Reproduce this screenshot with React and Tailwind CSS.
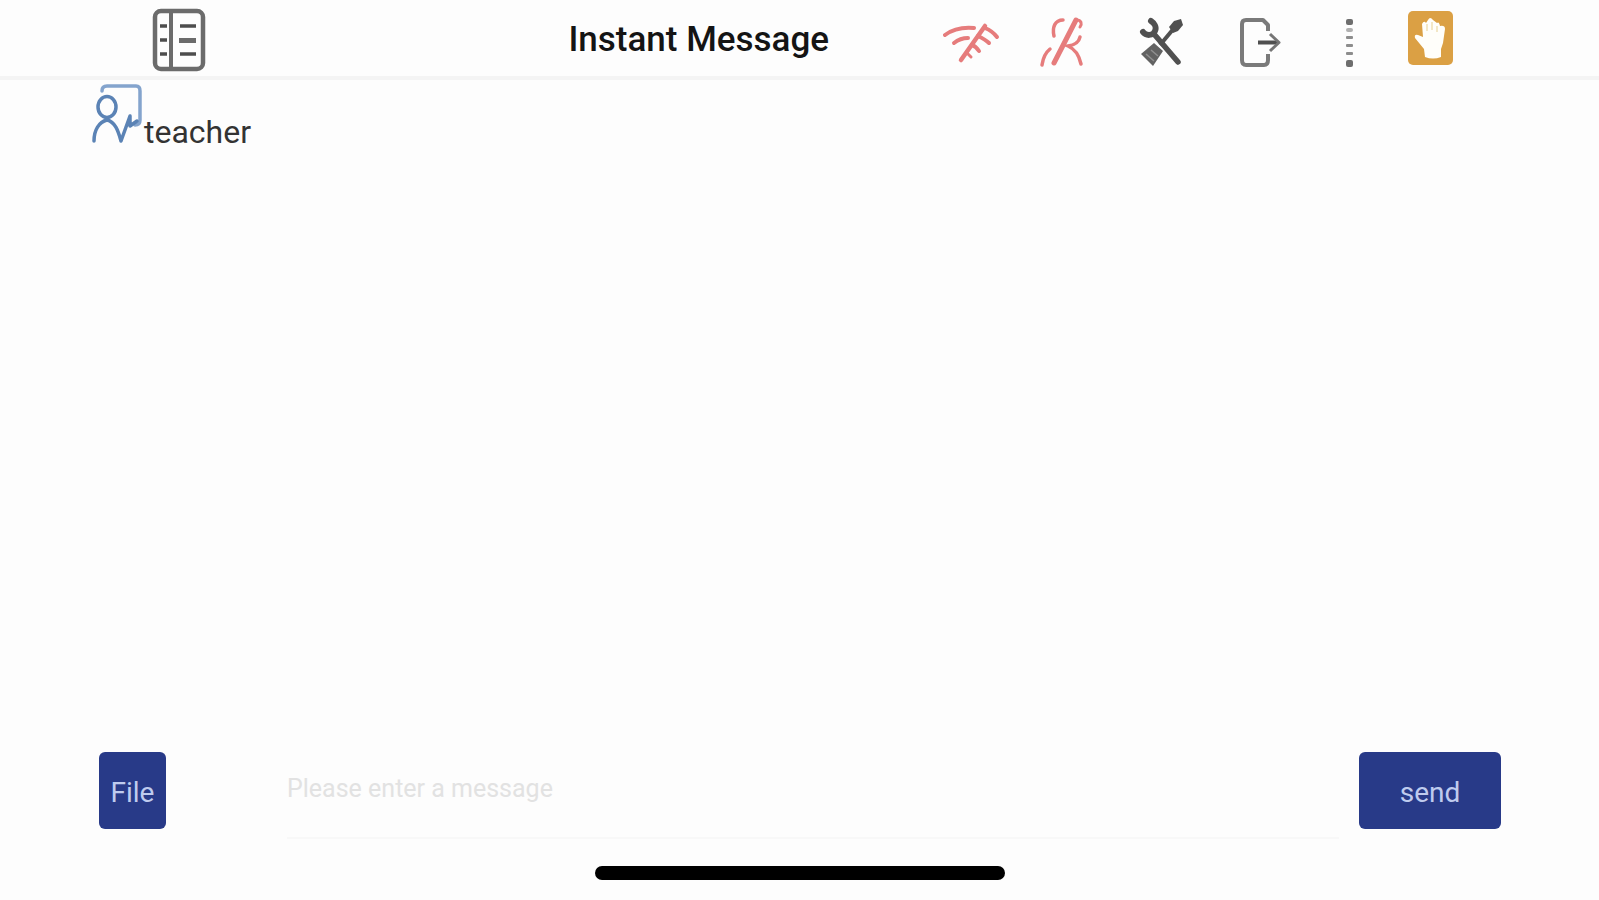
import React, { useState } from 'react';

const App = () => {
  const [message, setMessage] = useState('');

  const handleSend = (e) => {
    e.preventDefault();
    setMessage('');
  };

  return (
    <div className="min-h-screen flex flex-col bg-[#fdfdfd] font-['Roboto',sans-serif] text-[#333333]">
      <header className="flex items-center pl-[152px] pr-[146px] border-b-4 border-[#f4f4f4]">
        <IconButton label="Menu">
          <MenuIcon />
        </IconButton>
        <h1 className="ml-auto pt-1 text-[35px] leading-[72px] font-medium text-[#141414] whitespace-nowrap">
          Instant Message
        </h1>
        <nav className="flex items-center gap-10 ml-[114px]">
          <IconButton label="Network off">
            <WifiOffIcon />
          </IconButton>
          <IconButton label="Call off">
            <CallOffIcon />
          </IconButton>
          <IconButton label="Tools">
            <ToolsIcon />
          </IconButton>
          <IconButton label="Exit">
            <ExitIcon />
          </IconButton>
          <IconButton label="More">
            <MoreIcon />
          </IconButton>
          <IconButton label="Raise hand">
            <HandIcon />
          </IconButton>
        </nav>
      </header>

      <main className="flex-1 pl-[90px] pt-1">
        <div className="flex items-start gap-0.5">
          <TeacherIcon />
          <span className="pt-7 text-[32px] leading-10">teacher</span>
        </div>
      </main>

      <form onSubmit={handleSend} className="flex items-start pl-[99px] pr-[98px]">
        <button
          type="button"
          className="w-[67px] h-[77px] pt-1 shrink-0 rounded-md bg-[#283a88] text-[28px] text-[#bfcbee]"
        >
          File
        </button>
        <input
          type="text"
          aria-label="Message"
          value={message}
          onChange={(e) => setMessage(e.target.value)}
          placeholder="Please enter a message"
          className="flex-1 min-w-0 h-[87px] ml-[121px] mr-5 pb-3 border-b-2 border-[#f8f8f8] bg-transparent text-[25px] placeholder:text-[#e2e2e2] outline-none"
        />
        <button
          type="submit"
          className="w-[142px] h-[77px] pt-1 shrink-0 rounded-md bg-[#283a88] text-[28px] text-[#bfcbee]"
        >
          send
        </button>
      </form>

      <div className="w-[410px] h-3.5 mx-auto mt-[27px] mb-5 rounded-full bg-black" />
    </div>
  );
};

// ===== REUSABLE COMPONENTS =====

const IconButton = ({ label, children }) => (
  <button type="button" aria-label={label} className="shrink-0">
    {children}
  </button>
);

// ===== ICONS =====

const MenuIcon = () => (
  <svg className="block w-[54px] h-[76px]" viewBox="0 0 54 76" fill="none" stroke="#6b6b6b">
    <rect x="3" y="11" width="48" height="58" rx="6" strokeWidth="4.5" />
    <path d="M19 11v58" strokeWidth="4" />
    <path d="M8 26h7M8 40h7M8 54h7M28 26h16M28 54h16" stroke="#4d4d4d" strokeWidth="3.5" />
    <path d="M27 40.500h17" strokeWidth="5" />
  </svg>
);

const WifiOffIcon = () => (
  <svg
    className="block w-[57px] h-[76px]"
    viewBox="0 0 57 76"
    fill="none"
    stroke="#e67c7c"
    strokeWidth="4"
    strokeLinecap="round"
  >
    <path d="M2 35C10 29 20 27 31 28" />
    <path d="M11 43C16 39 20 38 25 38" />
    <path d="M42 26L18 60" strokeWidth="4.500" />
    <path d="M42 28C47 30 51 33 54 37" />
    <path d="M35 36C39 38 43 40 46 43" />
    <path d="M29 45C32 46 34 48 36 51" />
    <path d="M24 53L28 57" strokeWidth="3" />
  </svg>
);

const CallOffIcon = () => (
  <svg
    className="block w-[52px] h-[76px]"
    viewBox="0 0 52 76"
    fill="none"
    stroke="#e67c7c"
    strokeWidth="3.500"
    strokeLinecap="round"
  >
    <path d="M23 20C15 20 12 27 14 36" />
    <path d="M10 49C5 53 3 58 2 65" />
    <path d="M36 20L14 63" strokeWidth="5" />
    <path d="M36 20C42 20 42 24 40 27" strokeWidth="3" />
    <path d="M40 37C39 42 35 45 28 46C35 49 39 55 41 64" />
  </svg>
);

const ToolsIcon = () => (
  <svg className="block w-[58px] h-[76px]" viewBox="0 0 58 76" fill="none" stroke="#505050">
    <path d="M11 32C14 36 21 36 23 31C25 27 22 23 19 21" strokeWidth="6" strokeLinecap="round" />
    <path d="M22 34L46 62" strokeWidth="5.500" strokeLinecap="round" />
    <path d="M28 45L43 27" strokeWidth="4" />
    <path d="M37 27L42 21L49 19L51 25L46 31L41 33Z" fill="#505050" stroke="none" />
    <path d="M9 54L22 43L31 51L21 66Z" fill="#626262" stroke="none" />
    <path d="M14 54L22 61M19 50L26 56" stroke="#8f8f8f" strokeWidth="1.500" />
  </svg>
);

const ExitIcon = () => (
  <svg
    className="block w-[62px] h-[76px]"
    viewBox="0 0 62 76"
    fill="none"
    stroke="#7a7a7a"
    strokeWidth="4"
    strokeLinejoin="round"
  >
    <path d="M38 31V25L33 20H16Q12 20 12 24V60Q12 65 16 65H34Q38 65 38 60V54" />
    <path d="M28 42.500H48" stroke="#4f4f4f" />
    <path d="M40 34L49 42.500L40 51" strokeWidth="3" stroke="#757575" />
  </svg>
);

const MoreIcon = () => (
  <svg className="block w-[36px] h-[76px]" viewBox="0 0 36 76" fill="#6e6e6e">
    <rect x="14" y="19" width="7" height="6" rx="2" />
    <rect x="14" y="28" width="7" height="4" rx="2" fill="#b0b0b0" />
    <rect x="14" y="36" width="7" height="3" rx="1" fill="#8d8d8d" />
    <rect x="14" y="44" width="7" height="3" rx="1" fill="#8d8d8d" />
    <rect x="14" y="52" width="7" height="3" rx="1" fill="#8d8d8d" />
    <rect x="14" y="60" width="7" height="7" rx="2" />
  </svg>
);

const HandIcon = () => (
  <svg className="block w-[45px] h-[76px]" viewBox="0 0 45 76">
    <rect x="0" y="11" width="45" height="54" rx="5" fill="#dba044" />
    <path
      d="M17 57L16 49L7 38Q6 34 10 35L15 37L14 24Q16 20 18 23L20 20Q22 16 25 20L29 23Q31 21 32 26Q37 25 37 29L35 43L33 49V57Q25 60 17 57Z"
      fill="#fffefa"
    />
    <path d="M19 24V31M24 22V30M29 26V32" stroke="#f0dfb5" strokeWidth="1.500" fill="none" />
  </svg>
);

const TeacherIcon = () => (
  <svg
    className="block w-[52px] h-[62px]"
    viewBox="0 0 52 62"
    fill="none"
    stroke="#5b83b5"
    strokeWidth="3.500"
    strokeLinecap="round"
    strokeLinejoin="round"
  >
    <path d="M12 7Q12 2 17 2H46Q50 2 50 7V36Q50 41 45 41" stroke="#84a4cd" />
    <ellipse cx="17" cy="23" rx="9" ry="10.500" />
    <path d="M4 57C4 46 9 38 17 36C25 38 28 46 31 57L40 32V42L47 37" />
  </svg>
);

export default App;
